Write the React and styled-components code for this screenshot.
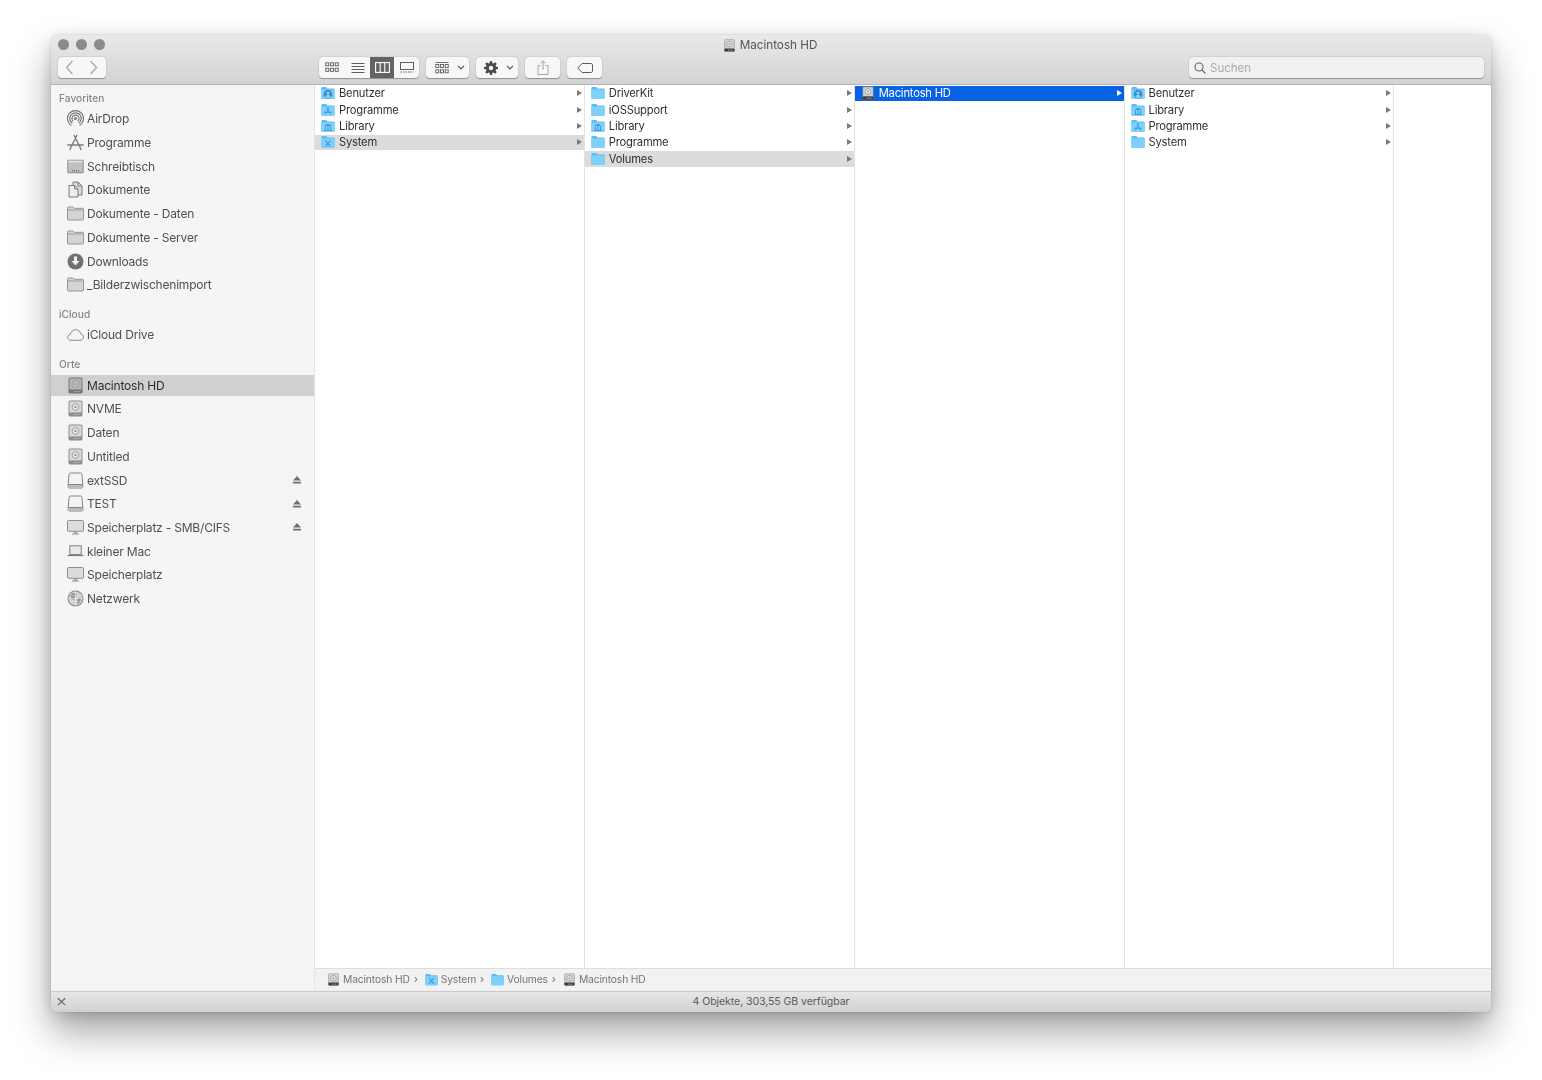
import React from "react";
import styled, { createGlobalStyle } from "styled-components";

const Global = createGlobalStyle`
  html, body { margin: 0; padding: 0; background: #fff; }
  body { font-family: Inter, "Liberation Sans", sans-serif; width: 1542px; height: 1080px; overflow: hidden; }
  #root { height: 100%; }
`;

const Page = styled.div`
  height: 1080px;
  padding: 35px 51px 0;
  box-sizing: border-box;
`;
const Window = styled.div`
  width: 1440px;
  height: 977px;
  display: flex;
  flex-direction: column;
  border-radius: 6px;
  overflow: hidden;
  background: #fff;
  box-shadow: 0 0 1px rgba(0,0,0,.45), 0 20px 38px rgba(0,0,0,.36), 0 3px 14px rgba(0,0,0,.14);
  filter: blur(0.35px);
`;
const TitleBar = styled.header`
  height: 50px;
  flex: none;
  box-sizing: border-box;
  background: linear-gradient(#e9e9e9, #d3d3d3);
  border-bottom: 1px solid #b5b5b5;
  display: flex;
  flex-direction: column;
`;
const TitleRow = styled.div`
  height: 20px;
  margin-bottom: 2px;
  padding-right: 2px;
  flex: none;
  position: relative;
  display: flex;
  align-items: center;
  justify-content: center;
  gap: 4px;
  font-size: 11.7px;
  color: #555;
`;
const Lights = styled.div`
  position: absolute;
  left: 7px;
  top: 4px;
  display: flex;
  gap: 7px;
`;
const Light = styled.span`
  width: 11px;
  height: 11px;
  border-radius: 50%;
  background: #8b8a8c;
`;
const Toolbar = styled.div`
  display: flex;
  align-items: flex-start;
  padding: 0 7px;
`;
const Group = styled.div`
  display: flex;
  height: 21px;
  margin-left: ${p => p.$ml ?? 7}px;
  border-radius: 4px;
  background: #f7f7f7;
  box-shadow: 0 0.5px 1px rgba(0,0,0,.3), 0 0 0 .5px rgba(0,0,0,.06);
  overflow: hidden;
`;
const Seg = styled.div`
  width: ${p => p.$w}px;
  box-sizing: border-box;
  padding-left: ${p => p.$pl || 0}px;
  display: flex;
  align-items: center;
  justify-content: center;
  gap: ${p => p.$gap || 0}px;
  color: ${p => p.$on ? "#fff" : "#5c5c5c"};
  background: ${p => p.$on ? "#636363" : "transparent"};
  & + & { border-left: ${p => p.$div ? "1px solid #d9d9d9" : "none"}; }
`;
const Search = styled.div`
  margin-left: auto;
  width: 295px;
  height: 21px;
  box-sizing: border-box;
  padding-left: 5px;
  display: flex;
  align-items: center;
  gap: 4px;
  border-radius: 4px;
  background: #f1f1f1;
  box-shadow: 0 0.5px 1px rgba(0,0,0,.3), 0 0 0 .5px rgba(0,0,0,.06);
  color: #a9a9a9;
  font-size: 11.5px;
`;
const Main = styled.div`
  flex: 1;
  min-height: 0;
  display: flex;
`;
const Sidebar = styled.nav`
  width: 264px;
  flex: none;
  box-sizing: border-box;
  padding-top: 5px;
  background: #f5f5f5;
  border-right: 1px solid #e4e4e4;
`;
const SectionLabel = styled.div`
  height: 16px;
  line-height: 16px;
  padding-left: 8px;
  margin-top: ${p => p.$mt || 0}px;
  margin-bottom: 2.4px;
  font-size: 10.2px;
  font-weight: 500;
  color: #858585;
`;
const SideRow = styled.div`
  height: 21px;
  margin-bottom: 2.7px;
  display: flex;
  align-items: center;
  padding-left: 16px;
  padding-right: 13px;
  font-size: 12px;
  letter-spacing: -0.2px;
  color: ${p => p.$on ? "#2e2e2e" : "#505050"};
  background: ${p => p.$on ? "#d0d0d0" : "transparent"};
`;
const SideIcon = styled.span`
  width: 17px;
  height: 17px;
  flex: none;
  margin-right: 3px;
  display: flex;
  align-items: center;
  justify-content: center;
`;
const Eject = styled.span`
  margin-left: auto;
  display: flex;
`;
const Content = styled.div`
  flex: 1;
  min-width: 0;
  display: flex;
  flex-direction: column;
`;
const Columns = styled.div`
  flex: 1;
  min-height: 0;
  display: flex;
`;
const Column = styled.div`
  width: 269.85px;
  flex: none;
  box-sizing: border-box;
  padding-top: 0.5px;
  border-right: 1px solid #e3e3e3;
  &:last-child { border-right: 0; flex: 1; }
`;
const Row = styled.div`
  height: 15.5px;
  margin-bottom: 0.9px;
  display: flex;
  align-items: center;
  padding: 0 2px 0 6px;
  font-size: 11.2px;
  letter-spacing: -0.2px;
  color: ${p => p.$state === "active" ? "#fff" : "#303030"};
  background: ${p => p.$state === "active" ? "#0862e4" : p.$state === "dim" ? "#dcdcdc" : "transparent"};
`;
const RowIcon = styled.span`
  width: 14px;
  height: 14px;
  flex: none;
  margin-right: 4px;
  display: flex;
`;
const Caret = styled.span`
  margin-left: auto;
  width: 0;
  height: 0;
  border-left: 5px solid ${p => p.$on ? "#fff" : "#7a7a7a"};
  border-top: 3.5px solid transparent;
  border-bottom: 3.5px solid transparent;
`;
const PathBar = styled.div`
  height: 23px;
  flex: none;
  box-sizing: border-box;
  padding: 0 0 2px 12px;
  display: flex;
  align-items: center;
  background: #f2f2f2;
  border-top: 1px solid #dedede;
  font-size: 10.3px;
  letter-spacing: -0.15px;
  color: #757575;
`;
const Crumb = styled.span`
  display: flex;
  align-items: center;
  gap: 3px;
`;
const Sep = styled.span`
  margin: 0 7px 0 4px;
  font-size: 11px;
`;
const StatusBar = styled.footer`
  height: 21px;
  flex: none;
  box-sizing: border-box;
  padding-bottom: 1px;
  position: relative;
  display: flex;
  align-items: center;
  justify-content: center;
  background: linear-gradient(#e6e6e6, #d1d1d1);
  border-top: 1px solid #c9c9c9;
  font-size: 10.6px;
  letter-spacing: -0.1px;
  color: #5b5b5b;
`;
const StatusIcon = styled.span`
  position: absolute;
  left: 6px;
  top: 5px;
  display: flex;
`;

/* ---------- drawings ---------- */
const Folder = ({ glyph, size = 14 }) => (
  <svg width={size} height={size} viewBox="0 0 14 14">
    <path d="M.4 3V2.200C.4 1.400 1 1 1.600 1h3.200c.6 0 .9.3 1.200.8l.4.6h6.200c.6 0 1 .4 1 1V12c0 .7-.4 1.100-1 1.100H1.400c-.6 0-1-.4-1-1.100z" fill="#5cbcf5" />
    <path d="M.4 4.300c0-.5.4-.9 1-.9h11.200c.6 0 1 .4 1 .9V12c0 .7-.4 1.100-1 1.100H1.400c-.6 0-1-.4-1-1.100z" fill="#7fd0fb" />
    {glyph === "user" && (
      <g>
        <circle cx="7" cy="8.200" r="4.400" fill="#3a8fd0" />
        <circle cx="7" cy="6.900" r="1.500" fill="#8fd4fb" />
        <path d="M4.300 10.900c.4-1.500 1.500-2 2.700-2s2.300.5 2.700 2c-.8.6-1.700.8-2.700.8s-1.900-.2-2.700-.8z" fill="#8fd4fb" />
      </g>
    )}
    {glyph === "app" && (
      <g stroke="#3f97d8" strokeWidth=".9" fill="none" strokeLinecap="round">
        <path d="M7.900 4.700 4.500 11M6.100 4.700 9.500 11M3.400 9.300h7.200" />
      </g>
    )}
    {glyph === "lib" && (
      <g fill="#3f97d8">
        <path d="M7 4.800 11 7H3z" />
        <path d="M4 7.500h1v3H4zM6.500 7.500h1v3h-1zM9 7.500h1v3H9zM3 10.800h8v1H3z" />
      </g>
    )}
    {glyph === "x" && (
      <path d="M4.300 5.400 9.700 11.700M9.700 5.400 4.300 11.700" stroke="#3f97d8" strokeWidth="1.100" fill="none" />
    )}
  </svg>
);

const Disk = ({ size = 14 }) => (
  <svg width={size} height={size} viewBox="0 0 14 14">
    <rect x="1.500" y=".5" width="11" height="13" rx="1.300" fill="#8f8f8f" />
    <rect x="2.200" y="1.200" width="9.600" height="8.800" rx=".6" fill="#d2d2d2" />
    <circle cx="7" cy="5.600" r="3" fill="#e4e4e4" stroke="#8d8d8d" strokeWidth=".7" />
    <circle cx="7" cy="5.600" r="1" fill="#9a9a9a" />
    <rect x="1.500" y="10.400" width="11" height="3.100" rx="1" fill="#3e3e3e" />
    <path d="M5.500 12h5" stroke="#ddd" strokeWidth=".7" strokeDasharray="1 .5" />
  </svg>
);

const SideDisk = ({ on }) => (
  <svg width="15" height="17" viewBox="0 0 15 17">
    <rect x=".5" y=".5" width="14" height="16" rx="1.600" fill={on ? "#757575" : "#8e8e8e"} />
    <rect x="1.500" y="1.500" width="12" height="11" rx=".8" fill={on ? "#b5b5b5" : "#d9d9d9"} />
    <circle cx="7.500" cy="7" r="3.400" fill={on ? "#c4c4c4" : "#e6e6e6"} stroke="#929292" strokeWidth=".8" />
    <circle cx="7.500" cy="7" r="1.200" fill="#9c9c9c" />
    <path d="M6 14.600h6.500" stroke="#c6c6c6" strokeWidth=".9" strokeDasharray="1 .6" />
  </svg>
);

const S = { fill: "none", stroke: "#7b7b7b", strokeWidth: 1 };
const sideIcons = {
  airdrop: (
    <svg width="17" height="17" viewBox="0 0 17 17" {...S}>
      <path d="M4.400 15.500A8 8 0 1 1 12.600 15.500" strokeWidth="1.200" />
      <path d="M5.300 13.200A5.700 5.700 0 1 1 11.700 13.200" strokeWidth="1.200" />
      <path d="M6.200 11.200A3.500 3.500 0 1 1 10.800 11.200" strokeWidth="1.200" />
      <circle cx="8.500" cy="8.500" r="1.500" fill="#7b7b7b" stroke="none" />
    </svg>
  ),
  apps: (
    <svg width="17" height="17" viewBox="0 0 17 17" {...S} strokeLinecap="round">
      <path d="M9.800 1.500 3.800 13.500M7.200 1.500 13.200 13.500M.8 11h15.400M3.800 13.500l-.7 2M13.200 13.500l.7 2" strokeWidth="1.400" />
    </svg>
  ),
  desktop: (
    <svg width="17" height="15" viewBox="0 0 17 15">
      <rect x=".3" y=".7" width="16.400" height="13.600" rx="1.200" fill="#8a8a8a" />
      <rect x="1.300" y="1.700" width="14.400" height="11.500" fill="#c1c1c1" />
      <rect x="1.300" y="1.700" width="14.400" height="1.600" fill="#e6e6e6" />
      <path d="M5 11.700h7" stroke="#555" strokeDasharray="1 1" />
    </svg>
  ),
  docs: (
    <svg width="17" height="17" viewBox="0 0 17 17" {...S}>
      <path d="M6 4V1h5l4 4v9h-4" fill="#dcdcdc" />
      <path d="M2 4.500h5.500L11 8v8H2z" fill="#ededed" />
      <path d="M7.500 4.500V8H11M11 1v4h4" />
    </svg>
  ),
  folder: (
    <svg width="17" height="15" viewBox="0 0 17 15">
      <path d="M.5 3V2.200C.5 1.500 1 1 1.700 1h4c.6 0 1 .3 1.300.8l.4.5h8.100c.5 0 1 .4 1 1V13c0 .6-.4 1-1 1H1.500c-.6 0-1-.4-1-1z" fill="#d4d4d4" stroke="#959595" />
      <path d="M1 4h15" stroke="#9d9d9d" />
    </svg>
  ),
  download: (
    <svg width="17" height="17" viewBox="0 0 17 17">
      <circle cx="8.500" cy="8.500" r="8" fill="#717171" />
      <path d="M7 3.500h3v4.500h2.500l-4 4.500-4-4.500H7z" fill="#f5f5f5" />
    </svg>
  ),
  cloud: (
    <svg width="17" height="12" viewBox="0 0 17 12" {...S} stroke="#888">
      <path d="M4 11.300C2 11.300.6 10 .6 8.400c0-1.500 1.100-2.700 2.600-2.800C3.800 2.700 6 .7 8.700.7c2.500 0 4.500 1.700 5 4 1.500.4 2.700 1.700 2.700 3.200 0 1.900-1.600 3.400-3.600 3.400z" />
    </svg>
  ),
  hd: <SideDisk />,
  hdOn: <SideDisk on />,
  ext: (
    <svg width="17" height="17" viewBox="0 0 17 17">
      <path d="M3.500 1h10c.8 0 1.300.5 1.400 1.300L16 14.500c0 .9-.6 1.500-1.500 1.500h-12c-.9 0-1.500-.6-1.500-1.500L2.100 2.300C2.200 1.500 2.700 1 3.500 1z" fill="#f3f3f3" stroke="#868686" />
      <path d="M1.200 12.500h14.600" stroke="#868686" />
      <path d="M1.500 13h14v2.500h-14z" fill="#b9b9b9" />
    </svg>
  ),
  mon: (
    <svg width="17" height="15" viewBox="0 0 17 15">
      <rect x=".5" y=".5" width="16" height="10.800" rx="1.200" fill="#dcdcdc" stroke="#8e8e8e" />
      <path d="M6.800 11.500h3.400l.4 2H6.400z" fill="#a6a6a6" />
      <path d="M5 14h7" stroke="#8e8e8e" />
    </svg>
  ),
  laptop: (
    <svg width="17" height="12" viewBox="0 0 17 12">
      <rect x="2.800" y=".8" width="11.400" height="8.800" fill="#e8e8e8" stroke="#7e7e7e" />
      <path d="M.5 10.500h16" stroke="#7e7e7e" strokeWidth="1.200" />
    </svg>
  ),
  globe: (
    <svg width="17" height="17" viewBox="0 0 17 17">
      <circle cx="8.500" cy="8.500" r="8" fill="#8b8b8b" />
      <circle cx="8.500" cy="8.500" r="7" fill="#cfcfcf" />
      <path d="M3 5l3-2 3 1 1 2-2 1-1 3-2-1-1-2zM11 8l3 .5-1 4-2.500 1.500-.5-3z" fill="#929292" />
      <path d="M1.500 8.500h14M8.500 1.500v14M3 4.500c3 2 8 2 11 0M3 12.500c3-2 8-2 11 0" stroke="#eee" strokeWidth=".6" fill="none" />
    </svg>
  ),
};

const Eject2 = () => (
  <svg width="8" height="8" viewBox="0 0 8 8" fill="#6f6f6f">
    <path d="M4 0 8 4.500H0zM0 5.800h8V7.500H0z" />
  </svg>
);

const sidebar = [
  { label: "Favoriten", items: [
    ["AirDrop", "airdrop"], ["Programme", "apps"], ["Schreibtisch", "desktop"], ["Dokumente", "docs"],
    ["Dokumente - Daten", "folder"], ["Dokumente - Server", "folder"], ["Downloads", "download"], ["_Bilderzwischenimport", "folder"],
  ]},
  { label: "iCloud", mt: 10.7, items: [["iCloud Drive", "cloud"]] },
  { label: "Orte", mt: 11.1, items: [
    ["Macintosh HD", "hdOn", "on"], ["NVME", "hd"], ["Daten", "hd"], ["Untitled", "hd"],
    ["extSSD", "ext", "eject"], ["TEST", "ext", "eject"], ["Speicherplatz - SMB/CIFS", "mon", "eject"],
    ["kleiner Mac", "laptop"], ["Speicherplatz", "mon"], ["Netzwerk", "globe"],
  ]},
];

const columns = [
  [["Benutzer", "user"], ["Programme", "app"], ["Library", "lib"], ["System", "x", "dim"]],
  [["DriverKit"], ["iOSSupport"], ["Library", "lib"], ["Programme"], ["Volumes", null, "dim"]],
  [["Macintosh HD", "disk", "active"]],
  [["Benutzer", "user"], ["Library", "lib"], ["Programme", "app"], ["System"]],
  [],
];

const crumbs = [["Macintosh HD", "disk"], ["System", "x"], ["Volumes", null], ["Macintosh HD", "disk"]];

const IconGrid = () => (
  <svg width="14" height="11" viewBox="0 0 14 11" fill="none" stroke="currentColor" strokeWidth=".9">
    <rect x=".8" y=".8" width="3" height="3" /><rect x="5.500" y=".8" width="3" height="3" /><rect x="10.200" y=".8" width="3" height="3" />
    <rect x=".8" y="6.300" width="3" height="3" /><rect x="5.500" y="6.300" width="3" height="3" /><rect x="10.200" y="6.300" width="3" height="3" />
  </svg>
);
const Chevron = () => (
  <svg width="8" height="5" viewBox="0 0 8 5" fill="none" stroke="#555" strokeWidth="1.200"><path d="M1 .8 4 3.800 7 .8" /></svg>
);

export default function App() {
  return (
    <Page>
      <Global />
      <Window>
        <TitleBar>
          <TitleRow>
            <Lights><Light /><Light /><Light /></Lights>
            <Disk size={13} />
            Macintosh HD
          </TitleRow>
          <Toolbar>
            <Group $ml={0}>
              <Seg $w={24}>
                <svg width="9" height="15" viewBox="1 0 9 15" fill="none" stroke="#a2a2a2" strokeWidth="1.200"><path d="M7.500 1 1.500 7.500l6 6.500" /></svg>
              </Seg>
              <Seg $w={24} $div>
                <svg width="9" height="15" viewBox="1 0 9 15" fill="none" stroke="#a2a2a2" strokeWidth="1.200"><path d="M1.500 1l6 6.500-6 6.500" /></svg>
              </Seg>
            </Group>
            <Group $ml={213}>
              <Seg $w={26} $div={false}><IconGrid /></Seg>
              <Seg $w={25}>
                <svg width="14" height="10" viewBox="0 0 14 10" stroke="currentColor"><path d="M.5 .5h13M.5 3.500h13M.5 6.500h13M.5 9.500h13" /></svg>
              </Seg>
              <Seg $w={24} $on>
                <svg width="15" height="11" viewBox="0 0 15 11" fill="none" stroke="currentColor" strokeWidth="1.100"><rect x=".6" y=".6" width="13.800" height="9.800" /><path d="M5.200 .6v9.800M9.800 .6v9.800" /></svg>
              </Seg>
              <Seg $w={25}>
                <svg width="14" height="11" viewBox="0 0 14 11" fill="none" stroke="currentColor"><rect x=".5" y=".5" width="13" height="7" /><path d="M.5 10h13" strokeDasharray="1.500 1" /></svg>
              </Seg>
            </Group>
            <Group>
              <Seg $w={43} $gap={8} $pl={4}>
                <svg width="14" height="12" viewBox="0 0 14 12" fill="none" stroke="#5c5c5c" strokeWidth=".9"><path d="M.5 .5h13" /><rect x=".8" y="2.500" width="3" height="3" /><rect x="5.500" y="2.500" width="3" height="3" /><rect x="10.200" y="2.500" width="3" height="3" /><rect x=".8" y="7.800" width="3" height="3" /><rect x="5.500" y="7.800" width="3" height="3" /><rect x="10.200" y="7.800" width="3" height="3" /></svg>
                <Chevron />
              </Seg>
            </Group>
            <Group>
              <Seg $w={42} $gap={8} $pl={3}>
                <svg width="14" height="14" viewBox="0 0 14 14" fill="#4a4a4a">
                  <path fillRule="evenodd" d="M6 0h2l.3 1.900 1.300.5L11.200 1.300 12.700 2.800 11.600 4.400l.5 1.300L14 6v2l-1.900.3-.5 1.300 1.100 1.600-1.500 1.500-1.600-1.100-1.300.5L8 14H6l-.3-1.900-1.300-.5-1.600 1.100-1.500-1.500 1.100-1.600-.5-1.300L0 8V6l1.900-.3.500-1.300L1.300 2.800 2.800 1.300l1.600 1.100 1.300-.5zM7 4.800a2.200 2.200 0 1 0 0 4.400 2.200 2.200 0 0 0 0-4.400z" />
                </svg>
                <Chevron />
              </Seg>
            </Group>
            <Group>
              <Seg $w={35}>
                <svg width="12" height="15" viewBox="0 0 12 15" fill="none" stroke="#a5a5a5"><path d="M3.500 5.500H1v9h10v-9H8.500M6 10V1M3.500 3.300 6 .8l2.500 2.500" /></svg>
              </Seg>
            </Group>
            <Group>
              <Seg $w={35}>
                <svg width="16" height="10" viewBox="0 0 16 10" fill="none" stroke="#5c5c5c"><path d="M5 .5h9c.8 0 1.500.7 1.500 1.500v6c0 .8-.7 1.500-1.500 1.500H5L.8 5z" /></svg>
              </Seg>
            </Group>
            <Search>
              <svg width="12" height="12" viewBox="0 0 12 12" fill="none" stroke="#666" strokeWidth="1.100"><circle cx="5" cy="5" r="4" /><path d="M8 8l3.500 3.500" /></svg>
              Suchen
            </Search>
          </Toolbar>
        </TitleBar>
        <Main>
          <Sidebar>
            {sidebar.map(sec => (
              <React.Fragment key={sec.label}>
                <SectionLabel $mt={sec.mt}>{sec.label}</SectionLabel>
                {sec.items.map(([name, icon, flag]) => (
                  <SideRow key={name} $on={flag === "on"}>
                    <SideIcon>{sideIcons[icon]}</SideIcon>
                    {name}
                    {flag === "eject" && <Eject><Eject2 /></Eject>}
                  </SideRow>
                ))}
              </React.Fragment>
            ))}
          </Sidebar>
          <Content>
            <Columns>
              {columns.map((col, i) => (
                <Column key={i}>
                  {col.map(([name, glyph, state]) => (
                    <Row key={name} $state={state}>
                      <RowIcon>{glyph === "disk" ? <Disk /> : <Folder glyph={glyph} />}</RowIcon>
                      {name}
                      <Caret $on={state === "active"} />
                    </Row>
                  ))}
                </Column>
              ))}
            </Columns>
            <PathBar>
              {crumbs.map(([name, glyph], i) => (
                <React.Fragment key={i}>
                  <Crumb>
                    {glyph === "disk" ? <Disk size={13} /> : <Folder glyph={glyph} size={13} />}
                    {name}
                  </Crumb>
                  {i < crumbs.length - 1 && <Sep>›</Sep>}
                </React.Fragment>
              ))}
            </PathBar>
          </Content>
        </Main>
        <StatusBar>
          <StatusIcon>
            <svg width="9" height="9" viewBox="0 0 11 11" fill="none" stroke="#666" strokeWidth="1.400"><path d="M1 1.500 10 10M10 1.500 1 10" /></svg>
          </StatusIcon>
          4 Objekte, 303,55 GB verfügbar
        </StatusBar>
      </Window>
    </Page>
  );
}
